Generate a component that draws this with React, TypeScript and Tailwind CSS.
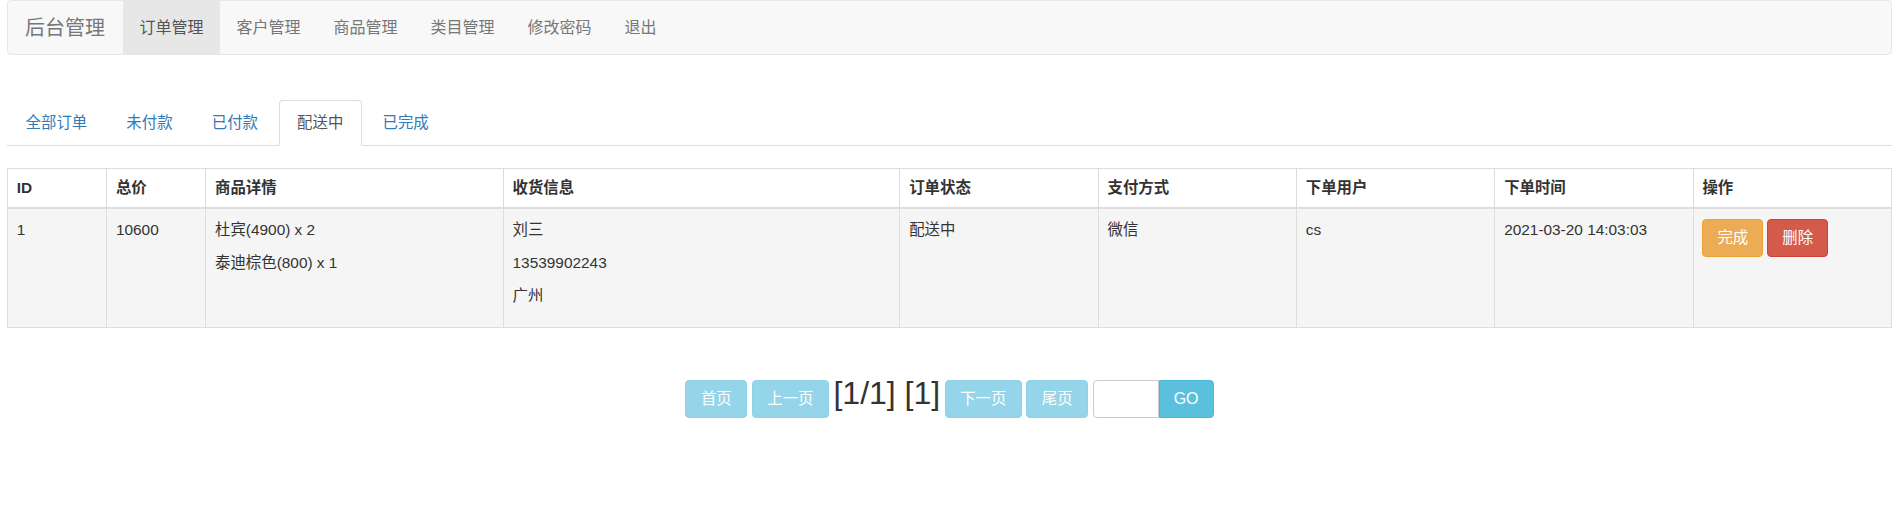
import React from "react";

const navItems = ["订单管理", "客户管理", "商品管理", "类目管理", "修改密码", "退出"];
const tabs = ["全部订单", "未付款", "已付款", "配送中", "已完成"];
const headers: { label: string; w: string }[] = [
  { label: "ID", w: "w-[5.263%]" },
  { label: "总价", w: "w-[5.263%]" },
  { label: "商品详情", w: "w-[15.789%]" },
  { label: "收货信息", w: "w-[21.053%]" },
  { label: "订单状态", w: "w-[10.526%]" },
  { label: "支付方式", w: "w-[10.526%]" },
  { label: "下单用户", w: "w-[10.526%]" },
  { label: "下单时间", w: "w-[10.526%]" },
  { label: "操作", w: "w-[10.526%]" },
];

function Lines({ items }: { items: string[] }) {
  return (
    <>
      {items.map((t) => (
        <p key={t} className="mb-[11px]">
          {t}
        </p>
      ))}
    </>
  );
}

export default function App() {
  const td = "border border-[#ddd] px-[8.8px] py-[9.5px] align-top";
  const pageBtn =
    "h-[38px] px-[14.5px] rounded-[4px] border border-[#8fd2e8] bg-[#94d5ea] text-white text-[15.4px] leading-[22px]";
  return (
    <div className="min-h-[517px] bg-white font-['Liberation_Sans','Noto_Sans_CJK_SC',sans-serif] text-[15.4px] leading-[22px] text-[#333]">
      <div className="pl-[7px] pr-[10px]">
        {/* navbar */}
        <nav className="flex h-[55px] items-stretch rounded-[4px] border border-[#e7e7e7] bg-[#f8f8f8]">
          <span className="flex items-center pl-[17px] pr-[18px] text-[20px] text-[#777]">后台管理</span>
          {navItems.map((n, i) => (
            <span
              key={n}
              className={
                "flex items-center px-[16.5px] text-[16px] " +
                (i === 0 ? "bg-[#e7e7e7] text-[#555]" : "text-[#777]")
              }
            >
              {n}
            </span>
          ))}
        </nav>

        {/* tabs */}
        <ul className="mt-[45px] flex border-b border-[#ddd]">
          {tabs.map((t) => {
            const active = t === "配送中";
            return (
              <li key={t} className="-mb-px mr-[2px]">
                <span
                  className={
                    "flex h-[46px] items-center rounded-t-[4px] border px-[17.6px] " +
                    (active
                      ? "border-[#ddd] border-b-transparent bg-white text-[#555]"
                      : "border-transparent text-[#337ab7]")
                  }
                >
                  {t}
                </span>
              </li>
            );
          })}
        </ul>

        {/* table */}
        <table className="mt-[22px] w-full table-fixed border-collapse border border-[#ddd]">
          <thead>
            <tr className="bg-white">
              {headers.map((h) => (
                <th
                  key={h.label}
                  className={
                    h.w +
                    " border border-b-2 border-[#ddd] px-[8.8px] py-[8px] text-left align-bottom font-bold"
                  }
                >
                  {h.label}
                </th>
              ))}
            </tr>
          </thead>
          <tbody>
            <tr className="bg-[#f5f5f5]">
              <td className={td}>1</td>
              <td className={td}>10600</td>
              <td className={td}>
                <Lines items={["杜宾(4900) x 2", "泰迪棕色(800) x 1"]} />
              </td>
              <td className={td}>
                <Lines items={["刘三", "13539902243", "广州"]} />
              </td>
              <td className={td}>配送中</td>
              <td className={td}>微信</td>
              <td className={td}>cs</td>
              <td className={td}>2021-03-20 14:03:03</td>
              <td className={td}>
                <div className="flex gap-[4px]">
                  <button className="h-[38px] rounded-[4px] border border-[#eea236] bg-[#ecab55] px-[14px] text-white">
                    完成
                  </button>
                  <button className="h-[38px] rounded-[4px] border border-[#d43f3a] bg-[#d45b4b] px-[14px] text-white">
                    删除
                  </button>
                </div>
              </td>
            </tr>
          </tbody>
        </table>

        {/* pagination */}
        <div className="mt-[49px] flex items-baseline justify-center gap-[4.5px]">
          <button className={pageBtn}>首页</button>
          <button className={pageBtn}>上一页</button>
          <span className="text-[32px] leading-[32px] text-[#333]">[1/1] [1]</span>
          <button className={pageBtn}>下一页</button>
          <button className={pageBtn}>尾页</button>
          <span className="inline-flex items-baseline">
            <input
              type="text"
              className="h-[38px] w-[66px] rounded-l-[4px] border border-[#ccc] bg-white px-[8px] text-[15.4px] outline-none"
            />
            <button className="h-[38px] rounded-r-[4px] border border-[#46b8da] bg-[#5bc0de] px-[14px] text-[16px] leading-[22px] text-white">
              GO
            </button>
          </span>
        </div>
      </div>
    </div>
  );
}
